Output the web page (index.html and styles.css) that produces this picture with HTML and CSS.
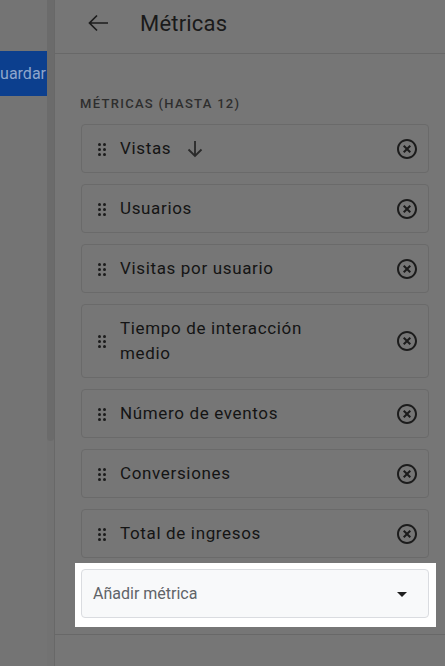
FILE: index.html
```html
<!DOCTYPE html>
<html lang="es">
<head>
    <meta charset="UTF-8">
    <meta name="viewport" content="width=device-width, initial-scale=1.0">
    <title>Métricas</title>
    <link rel="stylesheet" href="styles.css">
</head>
<body>
    <div class="behind">
        <div class="save-btn"><span>Guardar</span></div>
    </div>
    <div class="scroll"><div class="thumb"></div></div>

    <div class="panel">
        <div class="panel-header">
            <svg class="back" width="22" height="18" viewBox="0 0 22 18"><path d="M21 9H2.5M10 1.5L2.5 9l7.5 7.5" fill="none" stroke="#1c1c1c" stroke-width="1.7"/></svg>
            <h1>Métricas</h1>
        </div>

        <div class="panel-body">
            <div class="section-label">MÉTRICAS (HASTA 12)</div>

            <div class="metric-list">
                <div class="metric">
                    <svg class="handle" width="8" height="13" viewBox="0 0 8 13"><g fill="#1c1c1c"><circle cx="1.5" cy="1.5" r="1.5"/><circle cx="6.5" cy="1.5" r="1.5"/><circle cx="1.5" cy="6.5" r="1.5"/><circle cx="6.5" cy="6.5" r="1.5"/><circle cx="1.5" cy="11.5" r="1.5"/><circle cx="6.5" cy="11.5" r="1.5"/></g></svg>
                    <span class="metric-name">Vistas</span>
                    <svg class="sort" width="24" height="24" viewBox="0 0 24 24"><path d="M12 4v15M5.5 12.5L12 19l6.5-6.5" fill="none" stroke="#2a2a2a" stroke-width="1.8"/></svg>
                    <svg class="remove" width="24" height="24" viewBox="0 0 24 24"><path fill="#1c1c1c" d="M14.59 8L12 10.59 9.41 8 8 9.41 10.59 12 8 14.59 9.41 16 12 13.41 14.59 16 16 14.59 13.41 12 16 9.41 14.59 8zM12 2C6.47 2 2 6.47 2 12s4.47 10 10 10 10-4.47 10-10S17.53 2 12 2zm0 18c-4.41 0-8-3.59-8-8s3.59-8 8-8 8 3.59 8 8-3.59 8-8 8z"/></svg>
                </div>
                <div class="metric">
                    <svg class="handle" width="8" height="13" viewBox="0 0 8 13"><g fill="#1c1c1c"><circle cx="1.5" cy="1.5" r="1.5"/><circle cx="6.5" cy="1.5" r="1.5"/><circle cx="1.5" cy="6.5" r="1.5"/><circle cx="6.5" cy="6.5" r="1.5"/><circle cx="1.5" cy="11.5" r="1.5"/><circle cx="6.5" cy="11.5" r="1.5"/></g></svg>
                    <span class="metric-name">Usuarios</span>
                    <svg class="remove" width="24" height="24" viewBox="0 0 24 24"><path fill="#1c1c1c" d="M14.59 8L12 10.59 9.41 8 8 9.41 10.59 12 8 14.59 9.41 16 12 13.41 14.59 16 16 14.59 13.41 12 16 9.41 14.59 8zM12 2C6.47 2 2 6.47 2 12s4.47 10 10 10 10-4.47 10-10S17.53 2 12 2zm0 18c-4.41 0-8-3.59-8-8s3.59-8 8-8 8 3.59 8 8-3.59 8-8 8z"/></svg>
                </div>
                <div class="metric">
                    <svg class="handle" width="8" height="13" viewBox="0 0 8 13"><g fill="#1c1c1c"><circle cx="1.5" cy="1.5" r="1.5"/><circle cx="6.5" cy="1.5" r="1.5"/><circle cx="1.5" cy="6.5" r="1.5"/><circle cx="6.5" cy="6.5" r="1.5"/><circle cx="1.5" cy="11.5" r="1.5"/><circle cx="6.5" cy="11.5" r="1.5"/></g></svg>
                    <span class="metric-name">Visitas por usuario</span>
                    <svg class="remove" width="24" height="24" viewBox="0 0 24 24"><path fill="#1c1c1c" d="M14.59 8L12 10.59 9.41 8 8 9.41 10.59 12 8 14.59 9.41 16 12 13.41 14.59 16 16 14.59 13.41 12 16 9.41 14.59 8zM12 2C6.47 2 2 6.47 2 12s4.47 10 10 10 10-4.47 10-10S17.53 2 12 2zm0 18c-4.41 0-8-3.59-8-8s3.59-8 8-8 8 3.59 8 8-3.59 8-8 8z"/></svg>
                </div>
                <div class="metric tall">
                    <svg class="handle" width="8" height="13" viewBox="0 0 8 13"><g fill="#1c1c1c"><circle cx="1.5" cy="1.5" r="1.5"/><circle cx="6.5" cy="1.5" r="1.5"/><circle cx="1.5" cy="6.5" r="1.5"/><circle cx="6.5" cy="6.5" r="1.5"/><circle cx="1.5" cy="11.5" r="1.5"/><circle cx="6.5" cy="11.5" r="1.5"/></g></svg>
                    <span class="metric-name">Tiempo de interacción medio</span>
                    <svg class="remove" width="24" height="24" viewBox="0 0 24 24"><path fill="#1c1c1c" d="M14.59 8L12 10.59 9.41 8 8 9.41 10.59 12 8 14.59 9.41 16 12 13.41 14.59 16 16 14.59 13.41 12 16 9.41 14.59 8zM12 2C6.47 2 2 6.47 2 12s4.47 10 10 10 10-4.47 10-10S17.53 2 12 2zm0 18c-4.41 0-8-3.59-8-8s3.59-8 8-8 8 3.59 8 8-3.59 8-8 8z"/></svg>
                </div>
                <div class="metric">
                    <svg class="handle" width="8" height="13" viewBox="0 0 8 13"><g fill="#1c1c1c"><circle cx="1.5" cy="1.5" r="1.5"/><circle cx="6.5" cy="1.5" r="1.5"/><circle cx="1.5" cy="6.5" r="1.5"/><circle cx="6.5" cy="6.5" r="1.5"/><circle cx="1.5" cy="11.5" r="1.5"/><circle cx="6.5" cy="11.5" r="1.5"/></g></svg>
                    <span class="metric-name">Número de eventos</span>
                    <svg class="remove" width="24" height="24" viewBox="0 0 24 24"><path fill="#1c1c1c" d="M14.59 8L12 10.59 9.41 8 8 9.41 10.59 12 8 14.59 9.41 16 12 13.41 14.59 16 16 14.59 13.41 12 16 9.41 14.59 8zM12 2C6.47 2 2 6.47 2 12s4.47 10 10 10 10-4.47 10-10S17.53 2 12 2zm0 18c-4.41 0-8-3.59-8-8s3.59-8 8-8 8 3.59 8 8-3.59 8-8 8z"/></svg>
                </div>
                <div class="metric">
                    <svg class="handle" width="8" height="13" viewBox="0 0 8 13"><g fill="#1c1c1c"><circle cx="1.5" cy="1.5" r="1.5"/><circle cx="6.5" cy="1.5" r="1.5"/><circle cx="1.5" cy="6.5" r="1.5"/><circle cx="6.5" cy="6.5" r="1.5"/><circle cx="1.5" cy="11.5" r="1.5"/><circle cx="6.5" cy="11.5" r="1.5"/></g></svg>
                    <span class="metric-name">Conversiones</span>
                    <svg class="remove" width="24" height="24" viewBox="0 0 24 24"><path fill="#1c1c1c" d="M14.59 8L12 10.59 9.41 8 8 9.41 10.59 12 8 14.59 9.41 16 12 13.41 14.59 16 16 14.59 13.41 12 16 9.41 14.59 8zM12 2C6.47 2 2 6.47 2 12s4.47 10 10 10 10-4.47 10-10S17.53 2 12 2zm0 18c-4.41 0-8-3.59-8-8s3.59-8 8-8 8 3.59 8 8-3.59 8-8 8z"/></svg>
                </div>
                <div class="metric">
                    <svg class="handle" width="8" height="13" viewBox="0 0 8 13"><g fill="#1c1c1c"><circle cx="1.5" cy="1.5" r="1.5"/><circle cx="6.5" cy="1.5" r="1.5"/><circle cx="1.5" cy="6.5" r="1.5"/><circle cx="6.5" cy="6.5" r="1.5"/><circle cx="1.5" cy="11.5" r="1.5"/><circle cx="6.5" cy="11.5" r="1.5"/></g></svg>
                    <span class="metric-name">Total de ingresos</span>
                    <svg class="remove" width="24" height="24" viewBox="0 0 24 24"><path fill="#1c1c1c" d="M14.59 8L12 10.59 9.41 8 8 9.41 10.59 12 8 14.59 9.41 16 12 13.41 14.59 16 16 14.59 13.41 12 16 9.41 14.59 8zM12 2C6.47 2 2 6.47 2 12s4.47 10 10 10 10-4.47 10-10S17.53 2 12 2zm0 18c-4.41 0-8-3.59-8-8s3.59-8 8-8 8 3.59 8 8-3.59 8-8 8z"/></svg>
                </div>
            </div>

            <div class="spotlight">
                <div class="add-metric">
                    <span>Añadir métrica</span>
                    <svg width="24" height="24" viewBox="0 0 24 24"><path d="M7 10l5 5 5-5z" fill="#1f1f1f"/></svg>
                </div>
            </div>
        </div>

        <div class="panel-footer"></div>
    </div>
</body>
</html>
```

FILE: styles.css
```css
html, body {
    margin: 0;
    height: 100%;
}
body {
    display: flex;
    overflow: hidden;
    font-family: Roboto, "Noto Sans", sans-serif;
    background-color: #757575;
    color: #1c1c1c;
}
.behind {
    width: 47px;
    flex-shrink: 0;
    background: #747474;
}
.save-btn {
    margin-top: 51px;
    height: 45px;
    background: #0c3f8e;
    color: #8ea6cc;
    font-size: 16px;
    display: flex;
    align-items: center;
    justify-content: flex-end;
    overflow: hidden;
    white-space: nowrap;
    padding-right: 1px;
}
.scroll {
    width: 7px;
    flex-shrink: 0;
    background: #727272;
}
.thumb {
    height: 441px;
    background: #6b6b6b;
    border-radius: 0 0 4px 4px;
}
.panel {
    flex: 1;
    display: flex;
    flex-direction: column;
    background: #767676;
    border-left: 1px solid #686868;
}
.panel-header {
    height: 53px;
    display: flex;
    align-items: center;
    border-bottom: 1px solid #686868;
    padding-left: 32px;
}
.back {
    margin-right: 31px;
    margin-top: -8px;
}
h1 {
    margin: 0 0 7px;
    font-size: 22px;
    font-weight: 400;
    letter-spacing: 0.2px;
    color: #1a1a1a;
}
.panel-body {
    padding: 42px 16px 0 26px;
}
.section-label {
    font-size: 13px;
    font-weight: 500;
    letter-spacing: 1.3px;
    color: #2e2e2e;
    margin-left: -1px;
    margin-bottom: 13px;
}
.metric-list {
    display: flex;
    flex-direction: column;
    gap: 11px;
}
.metric {
    height: 49px;
    box-sizing: border-box;
    border: 1px solid #6a6a6a;
    border-radius: 4px;
    display: flex;
    align-items: center;
    padding: 0 9px 0 16px;
}
.metric.tall {
    height: 74px;
}
.handle {
    flex-shrink: 0;
    margin-top: 1px;
}
.metric-name {
    margin-left: 14px;
    font-size: 17px;
    line-height: 25px;
    letter-spacing: 0.65px;
    color: #141414;
    max-width: 215px;
}
.sort {
    margin-left: 12px;
}
.remove {
    margin-left: auto;
    flex-shrink: 0;
}
.spotlight {
    background: #fff;
    margin: 5px -7px 0 -6px;
    padding: 6px 7px 9px 6px;
}
.add-metric {
    height: 49px;
    box-sizing: border-box;
    border: 1px solid #dadce0;
    border-radius: 4px;
    background: #f8f9fa;
    display: flex;
    align-items: center;
    justify-content: space-between;
    padding: 0 14px 0 11px;
    font-size: 16px;
    color: #5f6368;
}
.panel-footer {
    margin-top: 7px;
    border-top: 1px solid #686868;
    flex: 1;
}
```
